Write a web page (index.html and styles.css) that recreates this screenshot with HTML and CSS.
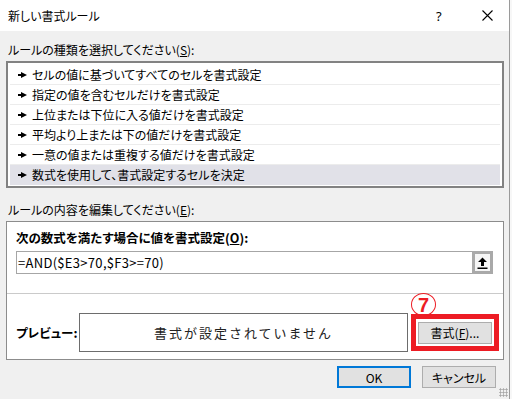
FILE: index.html
```html
<!DOCTYPE html>
<html>
<head>
    <link rel="stylesheet" href="styles.css">
</head>
<body>
    <div class="dialog">
        <div class="titlebar">
            <span class="title">新しい書式ルール</span>
            <span class="help">?</span>
            <span class="close">
                <svg width="11" height="11" viewBox="0 0 11 11"><path d="M0.5 0.5L10.5 10.5M10.5 0.5L0.5 10.5" stroke="#000" stroke-width="1.1"/></svg>
            </span>
        </div>
        <div class="content">
            <div class="label">ルールの種類を選択してください(<u>S</u>):</div>
            <ul class="rules">
                <li><i class="arrow"></i>セルの値に基づいてすべてのセルを書式設定</li>
                <li><i class="arrow"></i>指定の値を含むセルだけを書式設定</li>
                <li><i class="arrow"></i>上位または下位に入る値だけを書式設定</li>
                <li><i class="arrow"></i>平均より上または下の値だけを書式設定</li>
                <li><i class="arrow"></i>一意の値または重複する値だけを書式設定</li>
                <li class="selected"><i class="arrow"></i>数式を使用して、書式設定するセルを決定</li>
            </ul>

            <div class="label label-edit">ルールの内容を編集してください(<u>E</u>):</div>
            <div class="group">
                <div class="bold">次の数式を満たす場合に値を書式設定(<u>O</u>):</div>
                <div class="formula">
                    <span class="formula-text">=AND($E3&gt;70,$F3&gt;=70)</span>
                    <span class="collapse">
                        <svg width="11" height="12" viewBox="0 0 11 12"><path d="M5.5 0.5L10 5H7V9H4V5H1Z" fill="#000"/><rect x="0.5" y="10.5" width="10" height="1.5" fill="#000"/></svg>
                    </span>
                </div>
                <div class="sep"></div>
                <div class="preview-row">
                    <span class="bold preview-label">プレビュー:</span>
                    <div class="preview">書式が設定されていません</div>
                    <div class="mark">
                        <span class="step">7</span>
                        <button class="btn">書式(<u>F</u>)...</button>
                    </div>
                </div>
            </div>

            <div class="actions">
                <button class="btn btn-ok">OK</button>
                <button class="btn">キャンセル</button>
            </div>
            <span class="grip"></span>
        </div>
    </div>
</body>
</html>
```

FILE: styles.css
```css
body {
    margin: 0; background: #f7f7f7; overflow: hidden;
    font-family: "Noto Sans CJK JP", "Noto Sans", sans-serif;
    font-size: 12px; color: #000;
    font-feature-settings: "palt";
}
.dialog {
    width: 509px; height: 399px; overflow: hidden;
    background: #f0f0f0; border-right: 1px solid #9a9a9a;
}
.titlebar {
    height: 31px; background: #fff;
    display: flex; align-items: center;
    padding-left: 8px;
}
.title { flex: 1; line-height: 16px; }
.help { width: 14px; margin-right: 32px; font-size: 13px; font-family: "Noto Sans", sans-serif; }
.close { width: 11px; margin-right: 16px; height: 11px; display: flex; }

.content { position: relative; height: 368px; box-sizing: border-box; padding: 11px 5px 0 6px; }
.label { line-height: 16px; padding-left: 2px; }
.label-edit { margin-top: 14px; }

.rules {
    list-style: none; margin: 3px 0 0; padding: 2px 2px 1px;
    background: #fff; border: 2px solid #828282;
}
.rules li {
    height: 20px; line-height: 20px;
    display: flex; align-items: center;
    padding-left: 8px; box-sizing: border-box;
    border-bottom: 1px solid #ececec;
}
.rules li.selected { background: #e1e1e8; border-bottom: none; }
.arrow {
    width: 9px; height: 6px; margin-right: 5px;
    background: linear-gradient(#000, #000) 0 2px / 5px 2px no-repeat;
    position: relative;
}
.arrow::after {
    content: ""; position: absolute; left: 3px; top: 0;
    border-left: 6px solid #000;
    border-top: 3px solid transparent; border-bottom: 3px solid transparent;
}

.group {
    margin-top: 3px; background: #fff;
    border: 1px solid #8c8c8c;
    height: 139px; box-sizing: border-box;
    padding-top: 8px;
}
.bold { font-weight: bold; line-height: 16px; padding-left: 9px; font-size: 12.5px; }
.formula {
    margin: 5px 10px 0 9px; height: 23px; box-sizing: border-box;
    border: 1px solid #a6a6a6; display: flex; align-items: center;
}
.formula-text { flex: 1; padding-left: 1px; font-size: 13px; letter-spacing: 0.3px; font-feature-settings: normal; }
.collapse {
    width: 21px; height: 23px; box-sizing: border-box; margin-right: -1px;
    border: 3px solid #a9a9a9; background: #f5f5f5;
    display: flex; align-items: center; justify-content: center;
}
.sep { height: 1px; background: #cacaca; margin-top: 19px; }

.preview-row { display: flex; align-items: center; margin-top: 19px; }
.preview-label { width: 63px; }
.preview {
    width: 329px; height: 39px; box-sizing: border-box;
    border: 1px solid #6d6d6d;
    display: flex; align-items: center; justify-content: center;
    font-size: 13px; letter-spacing: 2px; font-feature-settings: normal;
    color: #222;
}
.mark {
    position: relative; margin-left: 3px;
    width: 88px; height: 37px; box-sizing: border-box;
    border: 5px solid #ed1c24;
    display: flex; align-items: center; justify-content: center;
}
.step {
    position: absolute; left: -5px; top: -26px;
    width: 25px; height: 23px; box-sizing: border-box;
    border: 1px solid #ed1c24; border-radius: 50%;
    color: #ed1c24; font-weight: bold; font-size: 20px; line-height: 1;
    display: flex; align-items: center; justify-content: center;
    font-family: "Liberation Sans", sans-serif;
}
.btn {
    font: inherit; font-size: 12px;
    background: #e1e1e1; border: 1px solid #adadad;
    width: 74px; height: 22px; padding: 0;
}
.actions { display: flex; justify-content: flex-end; gap: 11px; margin-top: 6px; padding-right: 8px; }
.btn-ok { border: 2px solid #0078d7; }
.grip {
    position: absolute; right: 1px; bottom: 2px;
    width: 9px; height: 9px;
    background: radial-gradient(circle, #a8a8a8 0.9px, transparent 1.3px) 0 0 / 3px 3px;
}
```
